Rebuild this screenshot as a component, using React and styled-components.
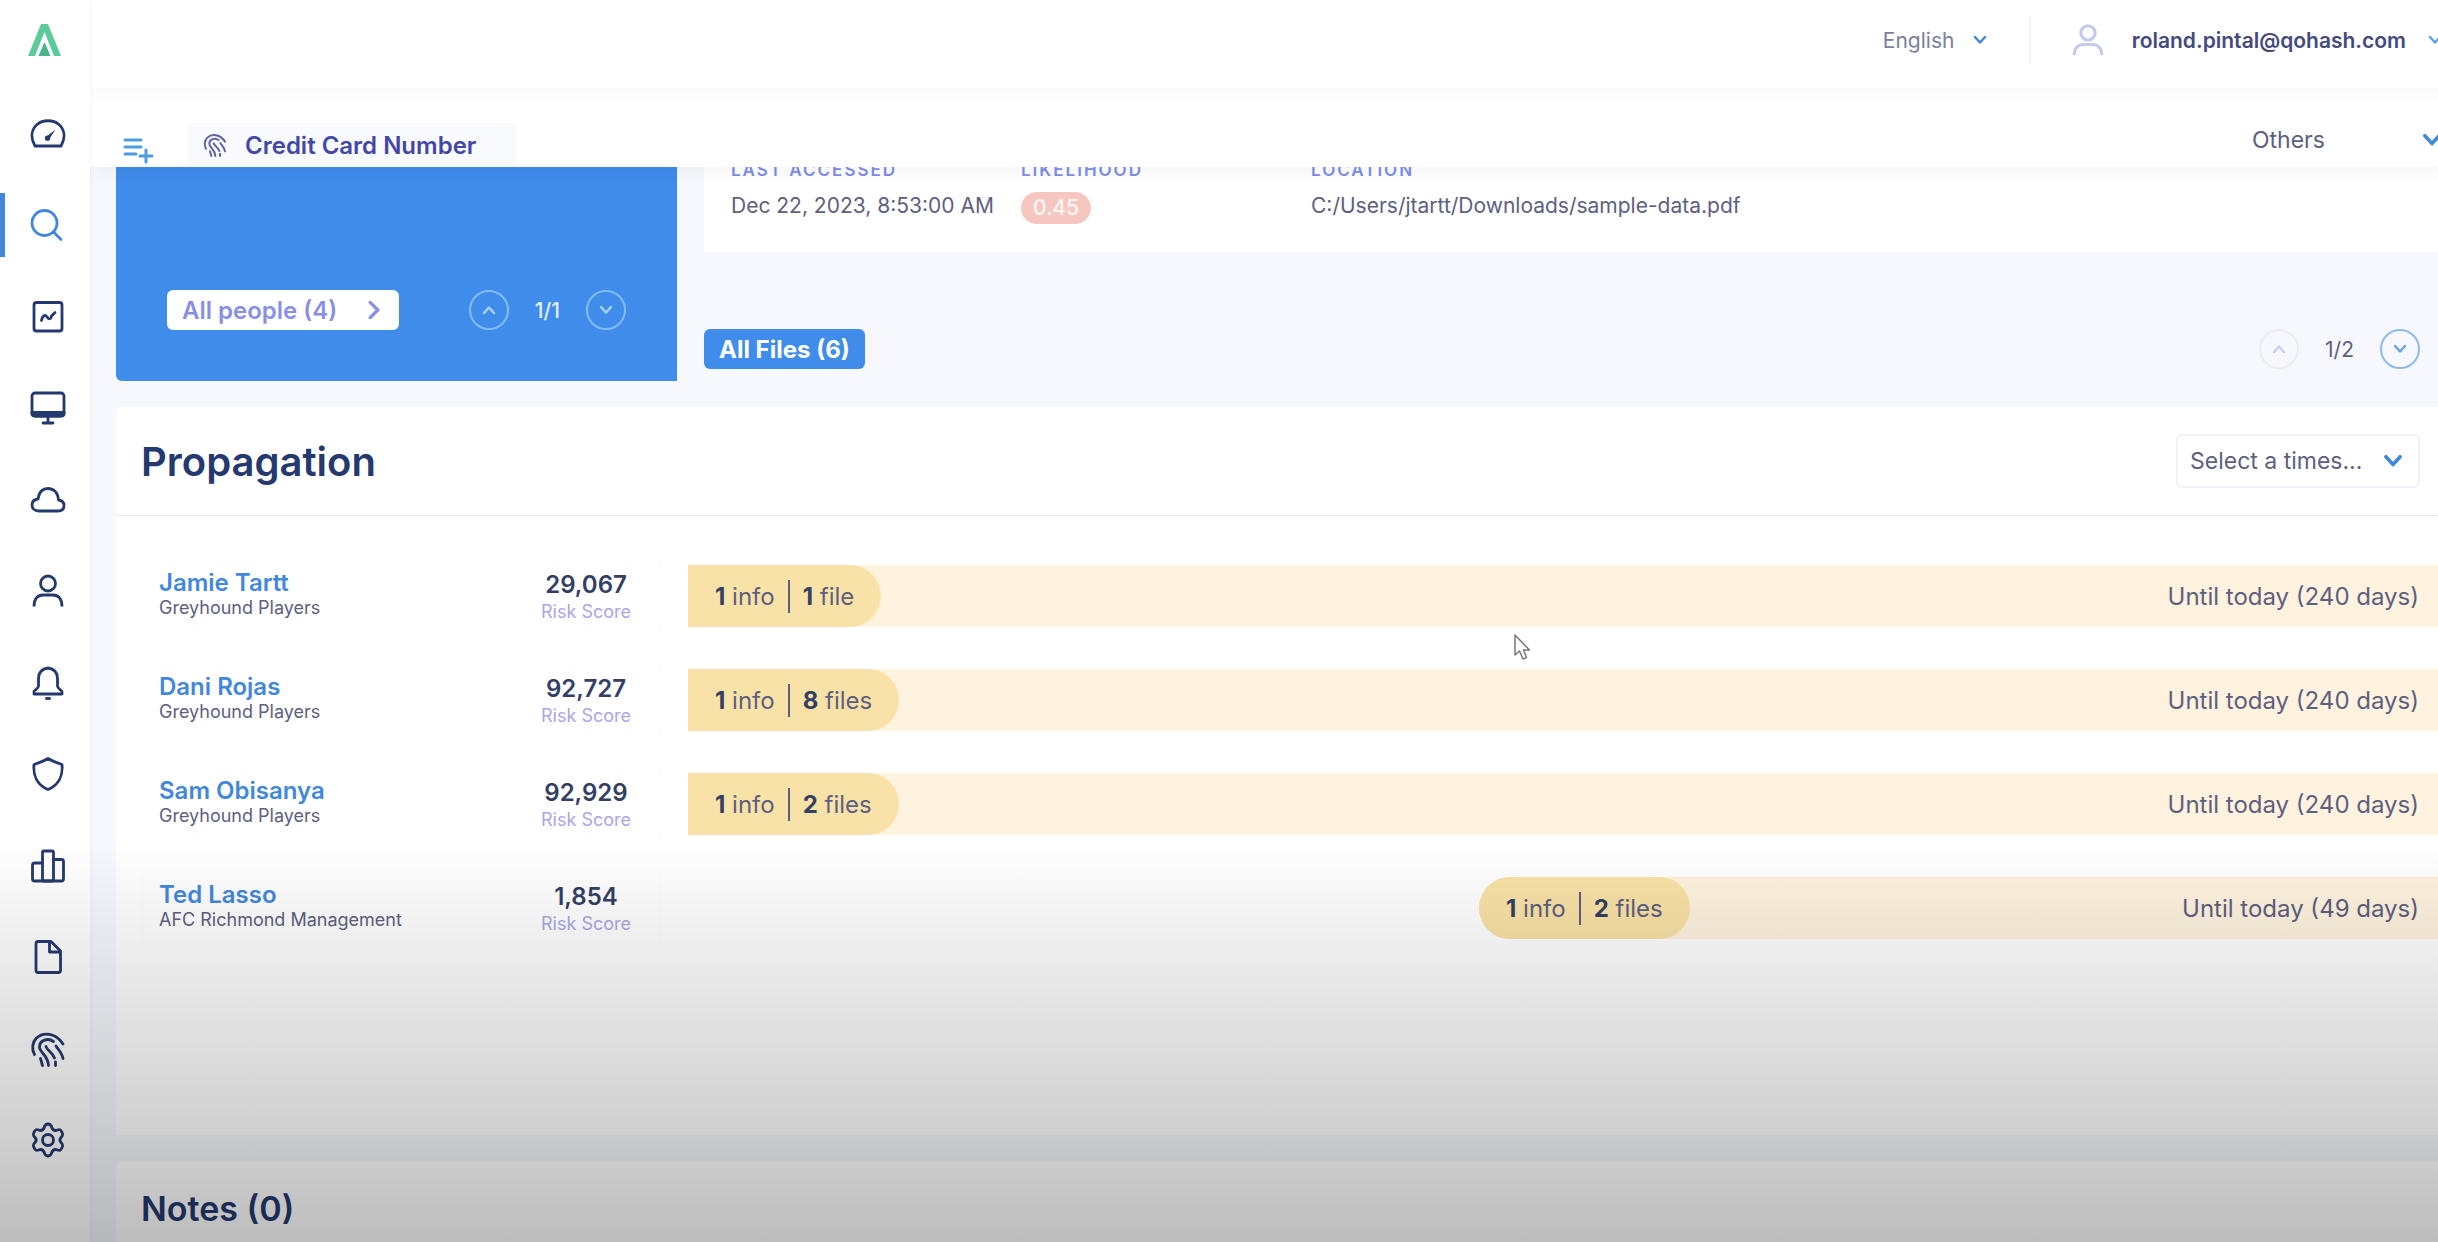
import React from "react";
import styled, { createGlobalStyle, css } from "styled-components";

const c = {
  blue: "#408ceb",
  link: "#4287dc",
  navy: "#24396f",
  ink: "#343f66",
  text: "#5d6080",
  muted: "#7b7e9c",
  lilac: "#a9a6ea",
  indigo: "#4248a6",
  page: "#f6f8fd",
  line: "#e6e8f1",
};

const GlobalStyle = createGlobalStyle`
  *, *::before, *::after { box-sizing: border-box; }
  body { margin: 0; font-family: Inter, "Liberation Sans", sans-serif; color: ${c.text}; background: ${c.page}; }
  h2, p, dl, dt, dd, ul { margin: 0; padding: 0; }
  ul { list-style: none; }
  button, select { font: inherit; color: inherit; border: 0; padding: 0; background: none; cursor: pointer; }
  a { text-decoration: none; }
  svg { display: block; flex: none; }
`;

const Shell = styled.div`
  position: relative;
  display: flex;
  height: 100vh;
  overflow: hidden;
`;

const Sidebar = styled.aside`
  position: relative;
  z-index: 3;
  display: flex;
  flex-direction: column;
  width: 90px;
  flex: none;
  background: #fff;
  box-shadow: 1px 0 4px rgba(40, 50, 90, 0.05);
`;

const Logo = styled.a`
  display: flex;
  height: 102px;
  padding: 24px 0 0 28px;
`;

const Nav = styled.nav`
  display: flex;
  flex: 1;
  flex-direction: column;
  justify-content: space-between;
  padding-bottom: 70px;
`;

const NavItem = styled.a`
  display: flex;
  align-items: center;
  height: 64px;
  padding-left: 25px;
  border-left: 5px solid transparent;
  color: ${c.navy};
  ${(p) =>
    p.$active &&
    css`
      border-left-color: ${c.link};
      color: ${c.link};
    `}
`;

const Main = styled.main`
  display: flex;
  flex: 1;
  flex-direction: column;
  min-width: 0;
`;

const Header = styled.header`
  position: relative;
  z-index: 2;
  display: flex;
  align-items: center;
  justify-content: flex-end;
  height: 88px;
  flex: none;
  margin-right: -4px;
  padding-bottom: 8px;
  background: #fff;
  box-shadow: 0 4px 20px rgba(30, 30, 50, 0.04);
`;

const SelectBox = styled.label`
  position: relative;
  display: flex;
  align-items: center;
  width: ${(p) => p.$width}px;
  font-size: ${(p) => p.$size}px;
  color: ${(p) => p.$color || c.text};
  ${(p) =>
    p.$framed &&
    css`
      height: 54px;
      padding: 0 15px 0 12px;
      border: 2px solid #f0f1f8;
      border-radius: 6px;
    `}

  select {
    flex: 1;
    min-width: 0;
    appearance: none;
    outline: 0;
    text-overflow: ellipsis;
  }
  svg {
    pointer-events: none;
    color: ${c.link};
  }
`;

const Divider = styled.span`
  width: 2px;
  height: 46px;
  margin: 0 41px 0 42px;
  background: #f3f3fa;
`;

const Account = styled.button`
  display: flex;
  align-items: center;
  gap: 22px;
  font-size: 21px;
  font-weight: 600;
  color: #434a80;

  svg:first-child { color: #c5cbec; margin-right: 6px; }
  svg:last-child { color: #5fa3e6; }
`;

const TabBar = styled.div`
  position: relative;
  z-index: 1;
  display: flex;
  align-items: flex-end;
  height: 79px;
  flex: none;
  margin-right: -4px;
  padding-left: 32px;
  background: #fff;
  box-shadow: 0 2px 20px rgba(30, 30, 60, 0.06);
`;

const AddList = styled.button`
  display: flex;
  width: 66px;
  padding-bottom: 2px;
  color: #4f9be0;
`;

const Tab = styled.a`
  display: flex;
  align-items: center;
  gap: 18px;
  width: 328px;
  height: 44px;
  padding-left: 15px;
  background: #f9fafe;
  font-size: 24px;
  font-weight: 600;
  color: ${c.indigo};

  svg { color: #6064a2; }
`;

const TabSelect = styled.div`
  display: flex;
  align-items: center;
  height: 54px;
  margin-left: auto;
`;

const Content = styled.div`
  display: flex;
  flex: 1;
  flex-direction: column;
  gap: 26px;
  padding-left: 26px;
  min-height: 0;
`;

const Summary = styled.section`
  display: flex;
  gap: 27px;
  height: 214px;
  flex: none;
`;

const PeopleCard = styled.div`
  display: flex;
  align-items: flex-end;
  justify-content: space-between;
  width: 561px;
  padding: 0 51px 51px 51px;
  border-radius: 0 0 0 6px;
  background: ${c.blue};
`;

const PeopleButton = styled.button`
  display: flex;
  align-items: center;
  justify-content: space-between;
  width: 232px;
  height: 40px;
  padding: 0 16px 0 15px;
  border-radius: 6px;
  background: #fff;
  font-size: 24px;
  font-weight: 600;
  color: #8a8fe6;
`;

const Pager = styled.div`
  display: flex;
  align-items: center;
  gap: 26px;
  font-size: 21px;
  font-weight: ${(p) => (p.$inverse ? 500 : 400)};
  color: ${(p) => (p.$inverse ? "#e4efff" : c.text)};
`;

const Round = styled.button`
  display: flex;
  align-items: center;
  justify-content: center;
  width: 40px;
  height: 40px;
  border: 2px solid ${(p) => p.$line};
  border-radius: 50%;
  color: ${(p) => p.$ink};
`;

const FileColumn = styled.div`
  display: flex;
  flex: 1;
  flex-direction: column;
  justify-content: space-between;
  padding-bottom: 12px;
`;

const FileCard = styled.dl`
  display: grid;
  grid-template-columns: 290px 290px 1fr;
  align-content: end;
  height: 85px;
  overflow: hidden;
  padding: 0 27px 26px;
  background: #fff;
`;

const Field = styled.div`
  display: flex;
  flex-direction: column;
  gap: 12px;
  font-size: 21px;
  line-height: 28px;

  dt {
    font-size: 17px;
    font-weight: 600;
    line-height: 20px;
    letter-spacing: 2px;
    color: #7d8de9;
  }
  dd { height: 34px; white-space: nowrap; }
`;

const Likelihood = styled.span`
  display: flex;
  align-items: center;
  justify-content: center;
  width: 70px;
  height: 32px;
  border-radius: 16px;
  background: #f6c6c1;
  font-size: 21px;
  font-weight: 500;
  color: #fff8f4;
`;

const FileActions = styled.div`
  display: flex;
  align-items: center;
  justify-content: space-between;
  padding-right: 18px;
`;

const FilesButton = styled.button`
  height: 40px;
  padding: 0 15px;
  border-radius: 6px;
  background: ${c.blue};
  font-size: 24px;
  font-weight: 700;
  color: #fff;
`;

const Panel = styled.section`
  flex: none;
  border-radius: 6px 0 0 0;
  background: #fff;
`;

const PanelHead = styled.div`
  display: flex;
  align-items: center;
  justify-content: space-between;
  height: ${(p) => (p.$small ? 94 : 109)}px;
  padding: 0 18px 0 25px;
  border-bottom: ${(p) => (p.$small ? 0 : 1)}px solid ${c.line};
`;

const Title = styled.h2`
  font-size: ${(p) => (p.$small ? 34 : 40)}px;
  font-weight: 600;
  color: ${c.navy};
`;

const Rows = styled.ul`
  display: flex;
  flex-direction: column;
  gap: 34px;
  padding: 45px 0 192px 26px;
`;

const Row = styled.li`
  display: flex;
  align-items: center;
  gap: 27px;
`;

const Person = styled.div`
  display: flex;
  justify-content: space-between;
  width: 519px;
  height: 70px;
  flex: none;
  padding: 7px 24px 0 16px;
  border: 1px solid rgba(80, 90, 160, 0.02);
`;

const Lines = styled.div`
  display: flex;
  flex-direction: column;
  align-items: ${(p) => (p.$center ? "center" : "flex-start")};
  width: ${(p) => (p.$center ? "100px" : "auto")};
  padding-top: ${(p) => (p.$center ? 2 : 0)}px;
  gap: ${(p) => (p.$center ? 2 : 0)}px;
  font-size: 18px;
  line-height: 22px;
  color: ${(p) => (p.$center ? c.lilac : c.text)};

  a, strong {
    font-size: 24px;
    font-weight: 600;
    line-height: 28px;
  }
  a { color: ${c.link}; }
  strong { color: ${c.ink}; }
`;

const Timeline = styled.div`
  display: flex;
  flex: 1;
`;

const Track = styled.div`
  display: flex;
  align-items: center;
  justify-content: space-between;
  flex: 1;
  height: 62px;
  padding-right: 19px;
  border-radius: ${(p) => (p.$started ? "31px 0 0 31px" : 0)};
  background: #fff3df;
  font-size: 24px;
`;

const Pill = styled.div`
  display: flex;
  align-items: center;
  height: 62px;
  padding: 0 27px;
  border-radius: ${(p) => (p.$started ? "31px" : "0 31px 31px 0")};
  background: #f9e2a7;

  span + span {
    display: flex;
    align-items: center;
    height: 33px;
    margin-left: 13px;
    padding-left: 13px;
    border-left: 2px solid #5d6080;
  }
  span { white-space: pre; }
  b { font-weight: 700; color: ${c.ink}; }
`;

const Shade = styled.div`
  position: absolute;
  z-index: 4;
  inset: auto 0 0 0;
  height: 400px;
  pointer-events: none;
  background: linear-gradient(
    to bottom,
    rgba(0, 0, 0, 0) 0%,
    rgba(0, 0, 0, 0.06) 22%,
    rgba(0, 0, 0, 0.11) 42%,
    rgba(0, 0, 0, 0.19) 74%,
    rgba(0, 0, 0, 0.26) 100%
  );
`;

const Pointer = styled.svg`
  position: absolute;
  z-index: 5;
  left: 1513px;
  top: 633px;
`;

const Icon = ({ children, size = 36, box = 36, stroke = 3 }) => (
  <svg
    width={size}
    height={size}
    viewBox={`0 0 ${box} ${box}`}
    fill="none"
    stroke="currentColor"
    strokeWidth={stroke}
    strokeLinecap="round"
    strokeLinejoin="round"
    aria-hidden="true"
  >
    {children}
  </svg>
);

const Chevron = ({ dir = "down", size = 14, stroke = 2.5 }) => {
  const d = {
    down: "M2 4 L7 9.5 L12 4",
    up: "M2 10 L7 4.5 L12 10",
    right: "M4 1 L10 7 L4 13",
  }[dir];
  return (
    <Icon size={size} box={14} stroke={stroke}>
      <path d={d} />
    </Icon>
  );
};

const printPaths = (
  <>
    <path d="M4.5 23.5C1.6 18.5 2 11.5 6.5 7 13 .8 26 1.500 33 13" />
    <path d="M23.500 10.500C18 6.500 9.500 9 9.500 16 9.500 21.500 18 24 18.500 34.500" />
    <path d="M16 15.500C17 19.500 22 20.500 24.500 27" />
    <path d="M26 15C28.500 19 32 22 33 27.500" />
    <path d="M10.500 27.500 12.500 34.500" />
    <path d="M25.500 31V34.500" />
  </>
);

const navItems = [
  {
    label: "Dashboard",
    art: (
      <>
        <path d="M5 30C.5 22 1 14 7 8.500C13 3.500 23 3.500 29 8.500C35 14 35.500 22 31 30Z" />
        <path d="M25.500 13.500 19 23.500C17.500 25 14.500 23 16 21Z" fill="currentColor" stroke="none" />
        <circle cx="17.500" cy="22.200" r="2.600" fill="currentColor" stroke="none" />
      </>
    ),
  },
  {
    label: "Search",
    active: true,
    art: (
      <>
        <circle cx="14.500" cy="16" r="12.500" />
        <path d="M23.500 25 31 32.500" />
      </>
    ),
  },
  {
    label: "Reports",
    art: (
      <>
        <rect x="4" y="3.500" width="28" height="28.500" rx="2.500" />
        <path d="M11.500 21.500C12.500 16.500 15 15 17 18C19 21 21 20 21.500 17L25 13.500" />
      </>
    ),
  },
  {
    label: "Workstations",
    art: (
      <>
        <rect x="2" y="3" width="32" height="23" rx="3" />
        <path d="M2 22.500H34V24Q34 26 31 26H5Q2 26 2 24Z" fill="currentColor" />
        <path d="M18 27V33M13 33H23" />
      </>
    ),
  },
  {
    label: "Cloud",
    art: <path d="M9 29C4 29 2 26 2 23C2 19.500 4.500 17.500 8 17C9 10 13 6.500 18 6.500C24 6.500 28 11 28.500 18C32 18.500 34 20.500 34 23.500C34 27 32 29 28 29Z" />,
  },
  {
    label: "People",
    art: (
      <>
        <circle cx="18" cy="10.500" r="7.500" />
        <path d="M4 33.500C4 25.500 8 22 13 22H23C28 22 32 25.500 32 33.500" strokeLinecap="butt" />
      </>
    ),
  },
  {
    label: "Alerts",
    art: (
      <>
        <path d="M18 3C11.500 4 8.500 8 8.500 13.500V21C8.500 24 4 25 4 27V29H32V27C32 25 27.500 24 27.500 21V13.500C27.500 8 24.500 4 18 3Z" />
        <path d="M16.500 33.500H19.500" />
      </>
    ),
  },
  {
    label: "Policies",
    art: <path d="M18 2.500C13 5.500 9 7 4 8.500C3 19 7 29 18 33.500C29 29 33 19 32 8.500C27 7 23 5.500 18 2.500Z" />,
  },
  {
    label: "Statistics",
    art: (
      <>
        <rect x="12.500" y="3" width="11" height="30" rx="1.500" />
        <path d="M12.500 15H4.500Q2.500 15 2.500 17V31Q2.500 33 4.500 33H31.500Q33.500 33 33.500 31V13.500Q33.500 11.500 31.500 11.500H23.500" />
      </>
    ),
  },
  {
    label: "Files",
    art: (
      <>
        <path d="M8 2.500H21L30.500 12V31.500Q30.500 33.500 28.500 33.500H8Q6 33.500 6 31.500V4.500Q6 2.500 8 2.500Z" />
        <path d="M19.500 3V13H30" />
      </>
    ),
  },
  { label: "Identities", art: printPaths },
  {
    label: "Settings",
    art: (
      <>
        <path d="M18 2C21 2 21.500 4 22 6C23 8 25 9 27.500 8C30 7 31 8 32 10.500C33.500 13 32.500 14 31 15.500C29.500 17 29.500 19 31 20.500C32.500 22 33.500 23 32 25.500C31 28 30 29 27.500 28C25 27 23 28 22 30C21.500 32 21 34 18 34C15 34 14.500 32 14 30C13 28 11 27 8.500 28C6 29 5 28 4 25.500C2.500 23 3.500 22 5 20.500C6.500 19 6.500 17 5 15.500C3.500 14 2.500 13 4 10.500C5 8 6 7 8.500 8C11 9 13 8 14 6C14.500 4 15 2 18 2Z" />
        <circle cx="18" cy="18" r="5.500" />
      </>
    ),
  },
];

const people = [
  { name: "Jamie Tartt", team: "Greyhound Players", score: "29,067", files: 1, days: 240, offset: 0 },
  { name: "Dani Rojas", team: "Greyhound Players", score: "92,727", files: 8, days: 240, offset: 0 },
  { name: "Sam Obisanya", team: "Greyhound Players", score: "92,929", files: 2, days: 240, offset: 0 },
  { name: "Ted Lasso", team: "AFC Richmond Management", score: "1,854", files: 2, days: 49, offset: 45.2 },
];

const PersonRow = ({ name, team, score, files, days, offset }) => (
  <Row>
    <Person>
      <Lines>
        <a href="#person">{name}</a>
        <span>{team}</span>
      </Lines>
      <Lines $center>
        <strong>{score}</strong>
        <span>Risk Score</span>
      </Lines>
    </Person>
    <Timeline>
      <Track $started={offset > 0} style={{ marginLeft: `${offset}%` }}>
        <Pill $started={offset > 0}>
          <span><b>1</b> info</span>
          <span><b>{files}</b>{files === 1 ? " file" : " files"}</span>
        </Pill>
        <span>Until today ({days} days)</span>
      </Track>
    </Timeline>
  </Row>
);

export default function App() {
  return (
    <>
      <GlobalStyle />
      <Shell>
        <Sidebar>
          <Logo href="#home" aria-label="Home">
            <svg width="33" height="32" viewBox="0 0 33 32" fill="#5ccb9c" aria-hidden="true">
              <path d="M13 0H20L33 32H26L16.500 8 7 32H0Z" />
              <path d="M16.500 18 22.500 32H10.500Z" fill="#47b687" />
            </svg>
          </Logo>
          <Nav aria-label="Sections">
            {navItems.map((item) => (
              <NavItem key={item.label} href="#section" aria-label={item.label} $active={item.active}>
                <Icon stroke={2.8}>{item.art}</Icon>
              </NavItem>
            ))}
          </Nav>
        </Sidebar>

        <Main>
          <Header>
            <SelectBox $width={104} $size={21} $color={c.muted}>
              <select aria-label="Language" defaultValue="en">
                <option value="en">English</option>
              </select>
              <Chevron />
            </SelectBox>
            <Divider />
            <Account type="button">
              <Icon size={32} stroke={3.5}>
                <circle cx="18" cy="10" r="8" />
                <path d="M2.500 35C2.500 27 7 23 13 23H23C29 23 33.500 27 33.500 35" strokeLinecap="butt" />
              </Icon>
              roland.pintal@qohash.com
              <Chevron />
            </Account>
          </Header>

          <TabBar>
            <AddList type="button" aria-label="Add to list">
              <Icon size={32} box={32} stroke={3}>
                <path d="M3 7H19M3 14H19M3 21H14M24 17V29M18 23H30" />
              </Icon>
            </AddList>
            <Tab href="#credit-card">
              <Icon size={24} stroke={3}>
                {printPaths}
              </Icon>
              Credit Card Number
            </Tab>
            <TabSelect>
              <SelectBox $width={190} $size={23}>
                <select aria-label="Category" defaultValue="others">
                  <option value="others">Others</option>
                </select>
                <Chevron size={20} />
              </SelectBox>
            </TabSelect>
          </TabBar>

          <Content>
            <Summary>
              <PeopleCard>
                <PeopleButton type="button">
                  All people (4)
                  <Chevron dir="right" size={18} />
                </PeopleButton>
                <Pager $inverse>
                  <Round type="button" aria-label="Previous person" $line="#83bbf8" $ink="#a9d2fc">
                    <Chevron dir="up" />
                  </Round>
                  1/1
                  <Round type="button" aria-label="Next person" $line="#83bbf8" $ink="#a9d2fc">
                    <Chevron />
                  </Round>
                </Pager>
              </PeopleCard>
              <FileColumn>
                <FileCard>
                  <Field>
                    <dt>LAST ACCESSED</dt>
                    <dd>Dec 22, 2023, 8:53:00 AM</dd>
                  </Field>
                  <Field>
                    <dt>LIKELIHOOD</dt>
                    <dd><Likelihood>0.45</Likelihood></dd>
                  </Field>
                  <Field>
                    <dt>LOCATION</dt>
                    <dd>C:/Users/jtartt/Downloads/sample-data.pdf</dd>
                  </Field>
                </FileCard>
                <FileActions>
                  <FilesButton type="button">All Files (6)</FilesButton>
                  <Pager>
                    <Round type="button" aria-label="Previous file" $line="#ebecf6" $ink="#cfcfee">
                      <Chevron dir="up" />
                    </Round>
                    1/2
                    <Round type="button" aria-label="Next file" $line="#8ebbe9" $ink="#6ba3e0">
                      <Chevron />
                    </Round>
                  </Pager>
                </FileActions>
              </FileColumn>
            </Summary>

            <Panel>
              <PanelHead>
                <Title>Propagation</Title>
                <SelectBox $framed $width={244} $size={23}>
                  <select aria-label="Timespan" defaultValue="none">
                    <option value="none">Select a times...</option>
                  </select>
                  <Chevron size={20} />
                </SelectBox>
              </PanelHead>
              <Rows>
                {people.map((p) => (
                  <PersonRow key={p.name} {...p} />
                ))}
              </Rows>
            </Panel>

            <Panel>
              <PanelHead $small>
                <Title $small>Notes (0)</Title>
              </PanelHead>
            </Panel>
          </Content>
        </Main>

        <Shade />
        <Pointer width="20" height="28" viewBox="0 0 20 28" fill="#fff" stroke="#77777c" strokeWidth="1.500" strokeLinejoin="round" aria-hidden="true">
          <path d="M2 2V22L6.500 18 10 26 13.500 24.500 10.500 17H16.500Z" />
        </Pointer>
      </Shell>
    </>
  );
}
